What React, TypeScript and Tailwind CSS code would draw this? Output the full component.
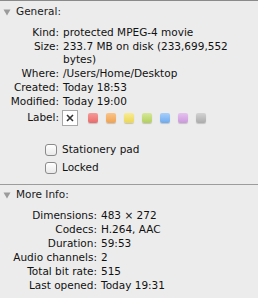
import React from 'react';

const font = { fontFamily: '"DejaVu Sans", Verdana, sans-serif' };

function Triangle() {
  return (
    <svg width="8" height="7" viewBox="0 0 8 7" className="shrink-0">
      <path d="M0.5 0.5 H7.5 L4 6.5 Z" fill="#9b9b9b" />
    </svg>
  );
}

function SectionHeader({ title }: { title: string }) {
  return (
    <div className="flex items-center h-[14px] pl-[3px] gap-[5px] text-[#1a1a1a]">
      <Triangle />
      <span>{title}</span>
    </div>
  );
}

function Row({ label, children, labelW }: { label: string; children: React.ReactNode; labelW: string }) {
  return (
    <div className="flex leading-[13px]">
      <div className={`${labelW} shrink-0 text-right`}>{label}</div>
      <div className="pl-[4px]">{children}</div>
    </div>
  );
}

const swatches = [
  ['#f59a98', '#e96b6a'],
  ['#f9c489', '#f0a253'],
  ['#f8ec94', '#ead654'],
  ['#d6e89a', '#b2cf5c'],
  ['#a7cffa', '#6eaaef'],
  ['#e6c2ef', '#cb98dc'],
  ['#d3d3d3', '#ababab'],
];

function Checkbox({ label }: { label: string }) {
  return (
    <div className="flex items-center h-[14px]">
      <div className="w-[12px] h-[12px] ml-[45px] rounded-[3px] border border-[#8a8a8a] bg-gradient-to-b from-white to-[#e9e9e9]" />
      <span className="ml-[5px]">{label}</span>
    </div>
  );
}

export default function App() {
  return (
    <div
      className="w-[258px] h-[298px] bg-[#ececec] border-t border-[#8a8a8a] text-[10.5px] text-[#111] overflow-hidden"
      style={font}
    >
      <div className="pt-[4px]">
        <SectionHeader title="General:" />
      </div>

      <div className="mt-[7px] flex flex-col gap-[1px]">
        <Row label="Kind:" labelW="w-[59px]">protected MPEG-4 movie</Row>
        <Row label="Size:" labelW="w-[59px]">
          233.7 MB on disk (233,699,552
          <br />
          bytes)
        </Row>
        <Row label="Where:" labelW="w-[59px]">/Users/Home/Desktop</Row>
        <Row label="Created:" labelW="w-[59px]">Today 18:53</Row>
        <Row label="Modified:" labelW="w-[59px]">Today 19:00</Row>
      </div>

      <div className="flex items-center mt-[1px] h-[18px]">
        <div className="w-[59px] text-right">Label:</div>
        <div className="ml-[3px] w-[16px] h-[16px] bg-white border border-[#a8a8a8] flex items-center justify-center">
          <svg width="8" height="8" viewBox="0 0 8 8">
            <path d="M1 1 L7 7 M7 1 L1 7" stroke="#333" strokeWidth="1.6" />
          </svg>
        </div>
        <div className="flex gap-[8px] ml-[10px]">
          {swatches.map(([a, b], i) => (
            <div
              key={i}
              className="w-[10px] h-[10px] rounded-[2px]"
              style={{ background: `linear-gradient(${a}, ${b})`, boxShadow: '0 1px 1px rgba(0,0,0,0.18)' }}
            />
          ))}
        </div>
      </div>

      <div className="mt-[16px] flex flex-col gap-[4px]">
        <Checkbox label="Stationery pad" />
        <Checkbox label="Locked" />
      </div>

      <div className="mt-[9px] border-t border-[#9c9c9c]" />

      <div className="pt-[3px]">
        <SectionHeader title="More Info:" />
      </div>

      <div className="mt-[7px] flex flex-col gap-[1px] leading-[13.2px]">
        <Row label="Dimensions:" labelW="w-[97px]">483 × 272</Row>
        <Row label="Codecs:" labelW="w-[97px]">H.264, AAC</Row>
        <Row label="Duration:" labelW="w-[97px]">59:53</Row>
        <Row label="Audio channels:" labelW="w-[97px]">2</Row>
        <Row label="Total bit rate:" labelW="w-[97px]">515</Row>
        <Row label="Last opened:" labelW="w-[97px]">Today 19:31</Row>
      </div>
    </div>
  );
}
